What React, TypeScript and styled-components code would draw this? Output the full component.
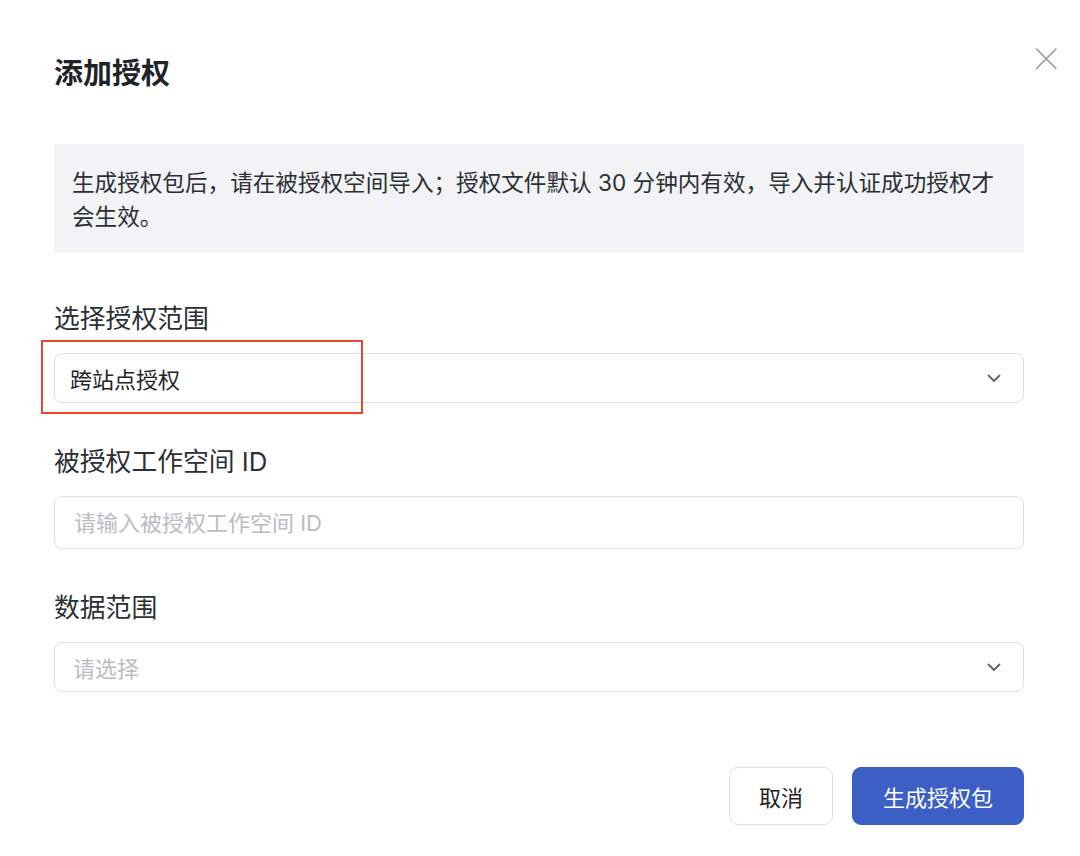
import React from "react";
import styled, { createGlobalStyle } from "styled-components";

const GlobalStyle = createGlobalStyle`
  html, body {
    margin: 0;
    padding: 0;
    background: #fff;
  }
  body {
    font-family: "Inter", "Noto Sans CJK SC", sans-serif;
    color: #1f2329;
  }
`;

const Chevron: React.FC = () => (
  <svg width="18" height="18" viewBox="0 0 18 18" fill="none">
    <path
      d="M3.5 6.5 L9 12 L14.5 6.5"
      stroke="#5f6368"
      strokeWidth="1.8"
      strokeLinecap="round"
      strokeLinejoin="round"
    />
  </svg>
);

const CloseIcon: React.FC = () => (
  <svg width="24" height="24" viewBox="0 0 24 24" fill="none">
    <path
      d="M2.5 2 L22 21.5 M22 2 L2.5 21.5"
      stroke="#9a9a9a"
      strokeWidth="1.6"
      strokeLinecap="round"
    />
  </svg>
);

const App: React.FC = () => {
  return (
    <>
      <GlobalStyle />
      <Modal>
        <Header>
          <Title>添加授权</Title>
          <CloseButton type="button" aria-label="close">
            <CloseIcon />
          </CloseButton>
        </Header>

        <Notice>
          生成授权包后，请在被授权空间导入；授权文件默认 30
          分钟内有效，导入并认证成功授权才会生效。
        </Notice>

        <Form>
          <Field>
            <Label>选择授权范围</Label>
            <Highlighted>
              <Select>
                <Value>跨站点授权</Value>
                <Chevron />
              </Select>
              <Mark />
            </Highlighted>
          </Field>

          <Field>
            <Label>被授权工作空间 ID</Label>
            <Input placeholder="请输入被授权工作空间 ID" />
          </Field>

          <Field>
            <Label>数据范围</Label>
            <Select>
              <Value empty>请选择</Value>
              <Chevron />
            </Select>
          </Field>
        </Form>

        <Footer>
          <Button>取消</Button>
          <Button primary>生成授权包</Button>
        </Footer>
      </Modal>
    </>
  );
};

export default App;

const Modal = styled.div`
  width: 1080px;
  height: 856px;
  box-sizing: border-box;
  padding: 54px 56px 0 54px;
  display: flex;
  flex-direction: column;
  background: #fff;
`;

const Header = styled.div`
  display: flex;
  align-items: flex-start;
  justify-content: space-between;
  margin-bottom: 50px;
`;

const Title = styled.h1`
  margin: 0;
  font-size: 29px;
  line-height: 40px;
  font-weight: 700;
  color: #1f2329;
`;

const CloseButton = styled.button`
  all: unset;
  cursor: pointer;
  margin-top: -7px;
  margin-right: -34px;
  display: flex;
`;

const Notice = styled.div`
  background: #f2f3f5;
  padding: 22px 19px 19px 18px;
  font-size: 22.6px;
  line-height: 34px;
  color: #2b2f36;
`;

const Form = styled.div`
  display: flex;
  flex-direction: column;
  gap: 41px;
  margin-top: 48px;
`;

const Field = styled.div`
  display: flex;
  flex-direction: column;
  gap: 16px;
`;

const Label = styled.div`
  font-size: 25.8px;
  line-height: 36px;
  color: #2b2f36;
`;

const Highlighted = styled.div`
  position: relative;
`;

const Mark = styled.div`
  position: absolute;
  left: -13px;
  top: -13px;
  width: 322px;
  height: 74px;
  box-sizing: border-box;
  border: 2px solid #e8472f;
  pointer-events: none;
`;

const Select = styled.div`
  height: 50px;
  box-sizing: border-box;
  border: 1px solid #dcdfe4;
  border-radius: 8px;
  padding: 0 20px 0 15px;
  display: flex;
  align-items: center;
  justify-content: space-between;
  font-size: 22px;
`;

const Value = styled.span<{ empty?: boolean }>`
  color: ${(p) => (p.empty ? "#b9bcc2" : "#1f2329")};
  padding-left: ${(p) => (p.empty ? "3px" : "0")};
`;

const Input = styled.input`
  height: 53px;
  box-sizing: border-box;
  border: 1px solid #dcdfe4;
  border-radius: 8px;
  padding: 0 19px;
  font-family: inherit;
  font-size: 22px;
  color: #1f2329;
  outline: none;

  &::placeholder {
    color: #b9bcc2;
  }
`;

const Footer = styled.div`
  display: flex;
  justify-content: flex-end;
  gap: 19px;
  margin-top: 75px;
`;

const Button = styled.button<{ primary?: boolean }>`
  height: 58px;
  box-sizing: border-box;
  padding: 0 ${(p) => (p.primary ? "30px" : "29px")};
  border-radius: 9px;
  border: 1px solid ${(p) => (p.primary ? "#3c5fc6" : "#dcdfe4")};
  background: ${(p) => (p.primary ? "#3c5fc6" : "#fff")};
  color: ${(p) => (p.primary ? "#fff" : "#1f2329")};
  font-family: inherit;
  font-size: 22px;
  cursor: pointer;
`;
